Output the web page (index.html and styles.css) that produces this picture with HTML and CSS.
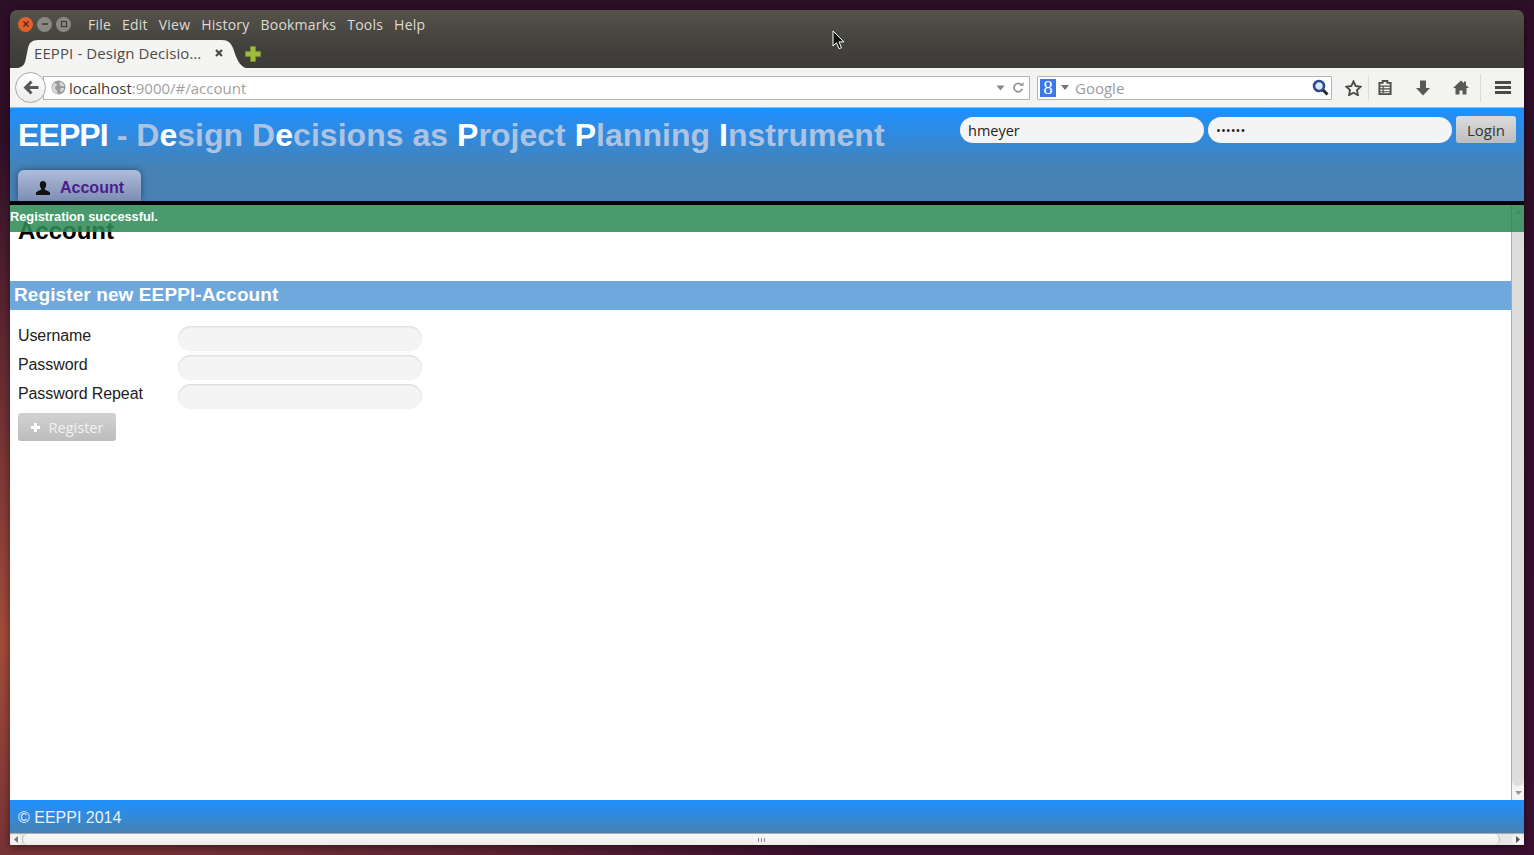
FILE: index.html
```html
<!DOCTYPE html>
<html>
<head>
<meta charset="utf-8">
<title>EEPPI</title>
<link rel="stylesheet" href="styles.css">
</head>
<body>

<div class="window">
    <div class="titlebar">
        <div class="win-buttons">
            <span class="win-btn close"><svg width="8" height="8" viewBox="0 0 8 8"><path d="M1.5 1.5l5 5M6.5 1.5l-5 5" stroke="#5a2010" stroke-width="1.3"/></svg></span>
            <span class="win-btn"><svg width="8" height="8" viewBox="0 0 8 8"><path d="M1 4h6" stroke="#3c3b37" stroke-width="1.6"/></svg></span>
            <span class="win-btn"><svg width="8" height="8" viewBox="0 0 8 8"><rect x="1.5" y="1.5" width="5" height="5" fill="none" stroke="#3c3b37" stroke-width="1.2"/></svg></span>
        </div>
        <div class="menu">
            <span>File</span><span>Edit</span><span>View</span><span>History</span><span>Bookmarks</span><span>Tools</span><span>Help</span>
        </div>
    </div>

    <div class="tabbar">
        <div class="tab">
            <span class="tab-title">EEPPI - Design Decisio…</span>
            <svg class="tab-close" width="10" height="10" viewBox="0 0 10 10"><path d="M2 2l6 6M8 2l-6 6" stroke="#4a4a48" stroke-width="2.2"/></svg>
        </div>
        <svg class="new-tab" width="18" height="18" viewBox="0 0 18 18"><path d="M6.5 1.5h5v5h5v5h-5v5h-5v-5h-5v-5h5z" fill="#9cbc3a" stroke="#7d9a2c" stroke-width="0.6"/></svg>
    </div>

    <div class="toolbar">
        <div class="back">
            <svg width="16" height="15" viewBox="0 0 16 15"><path d="M7.5 0.500L0.500 7.500l7 7 2-2-3-3.500H15.500v-3H6.500l3-3.500z" fill="#55595c"/></svg>
        </div>
        <div class="urlbar">
            <svg class="globe" width="15" height="15" viewBox="0 0 15 15"><circle cx="7.5" cy="7.5" r="7" fill="#9a9a9a"/><path d="M3 3c2 0 3 1 3 2s-2 1-2 3 2 1 2 3c0 1 0 2 1 3-3 0-6-3-6-6 0-2 1-4 2-5zM9 2c2 0 4 2 4 4-1 1-2 0-3 0S8 3 9 2zM10 8c1 0 2 0 3 0 0 2-1 3-3 4-1-1-1-3 0-4z" fill="#d8d8d8"/></svg>
            <span class="host">localhost</span><span class="path">:9000/#/account</span>
            <span class="url-end">
                <svg width="9" height="6" viewBox="0 0 9 6"><path d="M0.5 0.5h8L4.5 5.5z" fill="#888"/></svg>
                <svg width="11" height="11" viewBox="0 0 13 13"><path d="M10.5 4A5 5 0 1 0 11 8" fill="none" stroke="#999" stroke-width="2.200"/><path d="M8 4.5h4.5V0z" fill="#999"/></svg>
            </span>
        </div>
        <div class="searchbar">
            <span class="g-logo">8</span>
            <svg width="8" height="5" viewBox="0 0 8 5"><path d="M0 0h8L4 5z" fill="#777"/></svg>
            <span class="search-text">Google</span>
            <svg class="search-go" width="17" height="17" viewBox="0 0 17 17"><circle cx="7" cy="7" r="5" fill="#dce6f5" stroke="#2c4a94" stroke-width="2.6"/><path d="M11 11l4.5 4.5" stroke="#2b2b2b" stroke-width="3"/></svg>
        </div>
        <div class="tool star">
            <svg width="17" height="16" viewBox="0 0 18 17"><path d="M9 1.5l2.3 4.9 5.3.7-3.9 3.7 1 5.3L9 13.5l-4.7 2.6 1-5.3-3.9-3.7 5.3-.7z" fill="none" stroke="#4d4d4b" stroke-width="2"/></svg>
        </div>
        <div class="tool clip">
            <svg width="14" height="15" viewBox="0 0 14 16"><path d="M1 3h3.5V1h5v2H13v12H1z" fill="none" stroke="#4d4d4b" stroke-width="2"/><path d="M1 6.500h12M1 9.500h12M1 12.500h12M5 6v8" stroke="#4d4d4b" stroke-width="1.200"/></svg>
        </div>
        <div class="tool">
            <svg width="14" height="16" viewBox="0 0 14 16"><path d="M4 0.500h6V8h4l-7 7.500L0 8h4z" fill="#595957"/></svg>
        </div>
        <div class="tool">
            <svg width="16" height="15" viewBox="0 0 16 15"><path d="M8 0.500L0 8h2.500v6.500h4v-4h3v4h4V8H16l-3-2.800V1.500h-2v1.800z" fill="#595957"/></svg>
        </div>
        <div class="tool tool-menu">
            <svg width="16" height="13" viewBox="0 0 16 13"><path d="M0 0h16v3H0zM0 5h16v3H0zM0 10h16v3H0z" fill="#4a4a48"/></svg>
        </div>
    </div>

    <div class="page">
        <header class="header">
            <div class="header-top">
                <div class="brand"><b class="brand-name">EEPPI</b> - D<b>e</b>sign D<b>e</b>cisions as <b>P</b>roject <b>P</b>lanning <b>I</b>nstrument</div>
                <form class="login">
                    <input class="login-input" type="text" value="hmeyer">
                    <input class="login-input pw" type="password" value="secret">
                    <button class="login-btn" type="button">Login</button>
                </form>
            </div>
            <nav class="nav">
                <a class="nav-tab">
                    <svg width="14" height="14" viewBox="0 0 14 14"><path d="M7 0c2 0 3.200 1.500 3.200 3.500S9.200 7 8.500 8c0 1 4.500 2 5.500 3.500V14H0v-2.500C1 10 5.500 9 5.500 8 4.800 7 3.800 5.500 3.800 3.500S5 0 7 0z" fill="#111"/></svg>
                    Account
                </a>
            </nav>
        </header>

        <div class="middle">
            <main class="content">
                <h1>Account</h1>
                <h2 class="section">Register new EEPPI-Account</h2>
                <form class="form">
                    <label>Username</label>
                    <input type="text">
                    <label>Password</label>
                    <input type="password">
                    <label>Password Repeat</label>
                    <input type="password">
                </form>
                <button class="register" type="button">
                    <svg width="9" height="9" viewBox="0 0 9 9"><path d="M3 0h3v3h3v3H6v3H3V6H0V3h3z" fill="#fff"/></svg>
                    Register
                </button>
            </main>
            <div class="vscroll">
                <span class="vscroll-btn up"><svg width="7" height="4" viewBox="0 0 7 4"><path d="M0 4h7L3.500 0z" fill="#999"/></svg></span>
                <span class="vscroll-thumb"></span>
                <span class="vscroll-btn"><svg width="7" height="4" viewBox="0 0 7 4"><path d="M0 0h7L3.500 4z" fill="#999"/></svg></span>
            </div>
            <div class="flash">Registration successful.</div>
        </div>

        <footer class="footer">© EEPPI 2014</footer>

        <div class="hscroll">
            <span class="hscroll-btn"><svg width="4" height="7" viewBox="0 0 4 7"><path d="M4 0v7L0 3.500z" fill="#777"/></svg></span>
            <span class="hscroll-thumb"><i></i><i></i><i></i></span>
            <span class="hscroll-btn"><svg width="4" height="7" viewBox="0 0 4 7"><path d="M0 0v7l4-3.500z" fill="#555"/></svg></span>
        </div>
    </div>
</div>

<svg class="cursor" width="14" height="20" viewBox="0 0 14 20"><path d="M1 1v15l3.500-3.300 2.500 6 2.500-1-2.500-5.800h5z" fill="#111" stroke="#fff" stroke-width="1"/></svg>

</body>
</html>
```

FILE: styles.css
```css
* {
    box-sizing: border-box;
}

html, body {
    height: 100%;
    margin: 0;
}

body {
    padding: 10px 10px 10px 10px;
    overflow: hidden;
    font-family: "Open Sans", "Noto Sans", sans-serif;
    background:
        radial-gradient(ellipse 900px 500px at 0 75%, rgba(170, 80, 60, 0.95), rgba(170, 80, 60, 0) 100%),
        linear-gradient(#2e0f28, #3d1030);
}

.window {
    height: 835px;
    display: flex;
    flex-direction: column;
    border-radius: 7px 7px 0 0;
    overflow: hidden;
    box-shadow: 0 2px 8px rgba(0, 0, 0, 0.5);
}

/* title + menu */
.titlebar {
    height: 30px;
    flex: none;
    display: flex;
    align-items: center;
    padding: 0 0 2px 8px;
    background: linear-gradient(#56534c, #45433e);
}

.win-buttons {
    display: flex;
    gap: 4px;
    width: 70px;
}

.win-btn {
    width: 15px;
    height: 15px;
    border-radius: 50%;
    display: flex;
    align-items: center;
    justify-content: center;
    background: #8a8880;
}

.win-btn.close {
    background: #e2602c;
}

.menu {
    display: flex;
    gap: 11px;
    font-size: 14px;
    letter-spacing: 0.220px;
    color: #dfdbd2;
}

.tabbar {
    height: 28px;
    flex: none;
    display: flex;
    align-items: flex-end;
    padding-left: 8px;
    background: linear-gradient(#45433e, #3c3b37);
}

.tab {
    width: 228px;
    height: 28px;
    display: flex;
    align-items: center;
    padding: 0 22px 2px 16px;
    justify-content: space-between;
    background: #f4f4f3;
    clip-path: path("M0 28C5 27 7 24 8 18L10 8C11 3 14 0 20 0L204 0C210 0 213 3 215 8C218 17 221 26 228 28Z");
}

.tab-title {
    font-size: 15px;
    letter-spacing: 0.100px;
    color: #4c4c4a;
    white-space: nowrap;
}

.new-tab {
    margin: 0 0 5px -2px;
}

/* url bar row */
.toolbar {
    height: 40px;
    flex: none;
    display: flex;
    align-items: center;
    background: #f3f3f2;
    border-bottom: 1px solid #b5b5b3;
}

.back {
    width: 31px;
    height: 31px;
    margin-left: 5px;
    border-radius: 50%;
    border: 1px solid #a8a8a8;
    background: linear-gradient(#fff, #ececec);
    display: flex;
    align-items: center;
    justify-content: center;
    flex: none;
    position: relative;
    z-index: 1;
}

.urlbar {
    width: 987px;
    height: 24px;
    flex: none;
    margin-left: -3px;
    padding: 0 5px 0 7px;
    display: flex;
    align-items: center;
    background: #fff;
    border: 1px solid #b4b4b4;
    font-size: 15px;
}

.globe {
    margin-right: 3px;
}

.host {
    color: #3c3c3c;
}

.path {
    color: #a0a0a0;
}

.url-end {
    margin-left: auto;
    display: flex;
    align-items: center;
    gap: 8px;
}

.searchbar {
    width: 295px;
    height: 24px;
    flex: none;
    margin-left: 7px;
    padding: 0 2px;
    display: flex;
    align-items: center;
    background: #fff;
    border: 1px solid #b4b4b4;
    border-radius: 1px;
    font-size: 15px;
}

.g-logo {
    width: 16px;
    height: 18px;
    margin-right: 5px;
    background: #3b78e7;
    color: #fff;
    text-align: center;
    font: 19px/18px "Liberation Serif", serif;
}

.search-text {
    margin-left: 6px;
    color: #9b9b9b;
}

.search-go {
    margin-left: auto;
}

.tool {
    width: 38px;
    height: 30px;
    flex: none;
    display: flex;
    align-items: center;
    justify-content: center;
}

.tool.star {
    width: 37px;
    border-right: 1px solid #dcdcda;
    height: 24px;
    padding-left: 6px;
}

.tool.clip {
    width: 32px;
    margin-right: 3px;
}

.tool-menu {
    width: 44px;
    border-left: 1px solid #dcdcda;
    height: 28px;
}

/* page */
.page {
    flex: 1;
    display: flex;
    flex-direction: column;
    background: #fff;
    font-family: "Liberation Sans", Arial, sans-serif;
    min-height: 0;
}

.header {
    height: 97px;
    flex: none;
    display: flex;
    flex-direction: column;
    justify-content: space-between;
    padding: 0 8px;
    background: linear-gradient(#1e90ff, #4682b4 66%);
    border-bottom: 4px solid #000;
}

.header-top {
    display: flex;
    justify-content: space-between;
}

.brand {
    margin-top: 9px;
    font-size: 32px;
    line-height: 37px;
    font-weight: bold;
    color: #acc3e3;
    letter-spacing: 0.030px;
    white-space: nowrap;
}

.brand b {
    color: #fff;
}

.brand .brand-name {
    letter-spacing: -0.900px;
}

.login {
    display: flex;
    gap: 4px;
    margin-top: 8px;
    align-items: flex-start;
}

.login-input {
    width: 244px;
    height: 26px;
    margin-top: 1px;
    padding: 0 8px;
    border: 0;
    border-radius: 13px;
    background: #f4f4f4;
    font: 14.500px "Open Sans", sans-serif;
    color: #222;
}

.login-input.pw {
    font-size: 13px;
}

.login-btn {
    width: 60px;
    height: 27px;
    border: 0;
    border-radius: 3px;
    background: linear-gradient(#dcdcdc, #bdbdbd);
    font: 15px "Open Sans", sans-serif;
    color: #333;
    padding: 0;
}

.nav {
    display: flex;
}

.nav-tab {
    width: 123px;
    height: 31px;
    display: flex;
    align-items: center;
    gap: 10px;
    padding: 5px 0 0 18px;
    border-radius: 6px 6px 0 0;
    background: linear-gradient(#aebcdc, #7d8db2);
    box-shadow: 0 0 6px rgba(20, 30, 70, 0.6);
    font-size: 16px;
    font-weight: bold;
    color: #4b1e8c;
}

.middle {
    flex: 1;
    display: flex;
    position: relative;
    min-height: 0;
}

.content {
    flex: 1;
    padding-top: 10px;
}

.content h1 {
    margin: 0 0 0 8px;
    height: 66px;
    font-size: 24px;
    line-height: 32px;
    font-weight: bold;
    color: #000;
}

.section {
    margin: 0 0 16px;
    height: 29px;
    padding-left: 4px;
    font-size: 19px;
    line-height: 28px;
    letter-spacing: 0.100px;
    font-weight: bold;
    color: #fff;
    background: #6fa8dc;
}

.form {
    display: grid;
    grid-template-columns: 160px 244px;
    grid-auto-rows: 25px;
    row-gap: 4px;
    padding-left: 8px;
}

.form label {
    font-size: 16px;
    line-height: 20px;
    letter-spacing: -0.100px;
    color: #222;
}

.form input {
    border: 0;
    border-radius: 13px;
    background: #f4f4f4;
    box-shadow: inset 0 1px 2px rgba(0, 0, 0, 0.12);
}

.register {
    width: 98px;
    height: 28px;
    margin: 4px 0 0 8px;
    padding: 0;
    display: flex;
    align-items: center;
    justify-content: center;
    gap: 9px;
    border: 0;
    border-radius: 3px;
    background: linear-gradient(#d2d2d2, #bcbcbc);
    font: 14.500px "Open Sans", sans-serif;
    color: #f2f2f2;
}

.vscroll {
    width: 13px;
    flex: none;
    display: flex;
    flex-direction: column;
    background: #f2f0ee;
    border-left: 1px solid #a9a9a9;
}

.vscroll-btn {
    height: 14px;
    flex: none;
    display: flex;
    align-items: center;
    justify-content: center;
    background: #f6f5f3;
    border-radius: 0 0 6px 6px;
}

.vscroll-btn.up {
    border-radius: 6px 6px 0 0;
}

.vscroll-thumb {
    flex: 1;
    background: #dfdddb;
    border-radius: 6px;
}

.flash {
    position: absolute;
    top: 0;
    left: 0;
    right: 0;
    height: 27px;
    padding-top: 4px;
    font-size: 12.800px;
    line-height: 16px;
    font-weight: bold;
    color: #fff;
    background: rgba(47, 139, 87, 0.87);
}

.footer {
    height: 33px;
    flex: none;
    padding-left: 8px;
    font-size: 16px;
    line-height: 35px;
    color: #e9f1fb;
    background: linear-gradient(#1e90ff, #4682b4);
}

.hscroll {
    height: 12px;
    flex: none;
    display: flex;
    background: #e8e6e4;
    border-top: 1px solid #aaa;
}

.hscroll-btn {
    width: 12px;
    display: flex;
    align-items: center;
    justify-content: center;
    background: #f4f3f1;
    border-radius: 6px;
}

.hscroll-thumb {
    flex: 1;
    margin: 0 12px 0 0;
    display: flex;
    align-items: center;
    justify-content: center;
    gap: 2px;
    background: linear-gradient(#fafaf9, #ecebe8);
    border: 1px solid #bdbbb8;
    border-width: 0 1px;
    border-radius: 6px;
}

.hscroll-thumb i {
    width: 1px;
    height: 4px;
    background: #8a8a8a;
}

.cursor {
    position: absolute;
    left: 832px;
    top: 30px;
}
```
